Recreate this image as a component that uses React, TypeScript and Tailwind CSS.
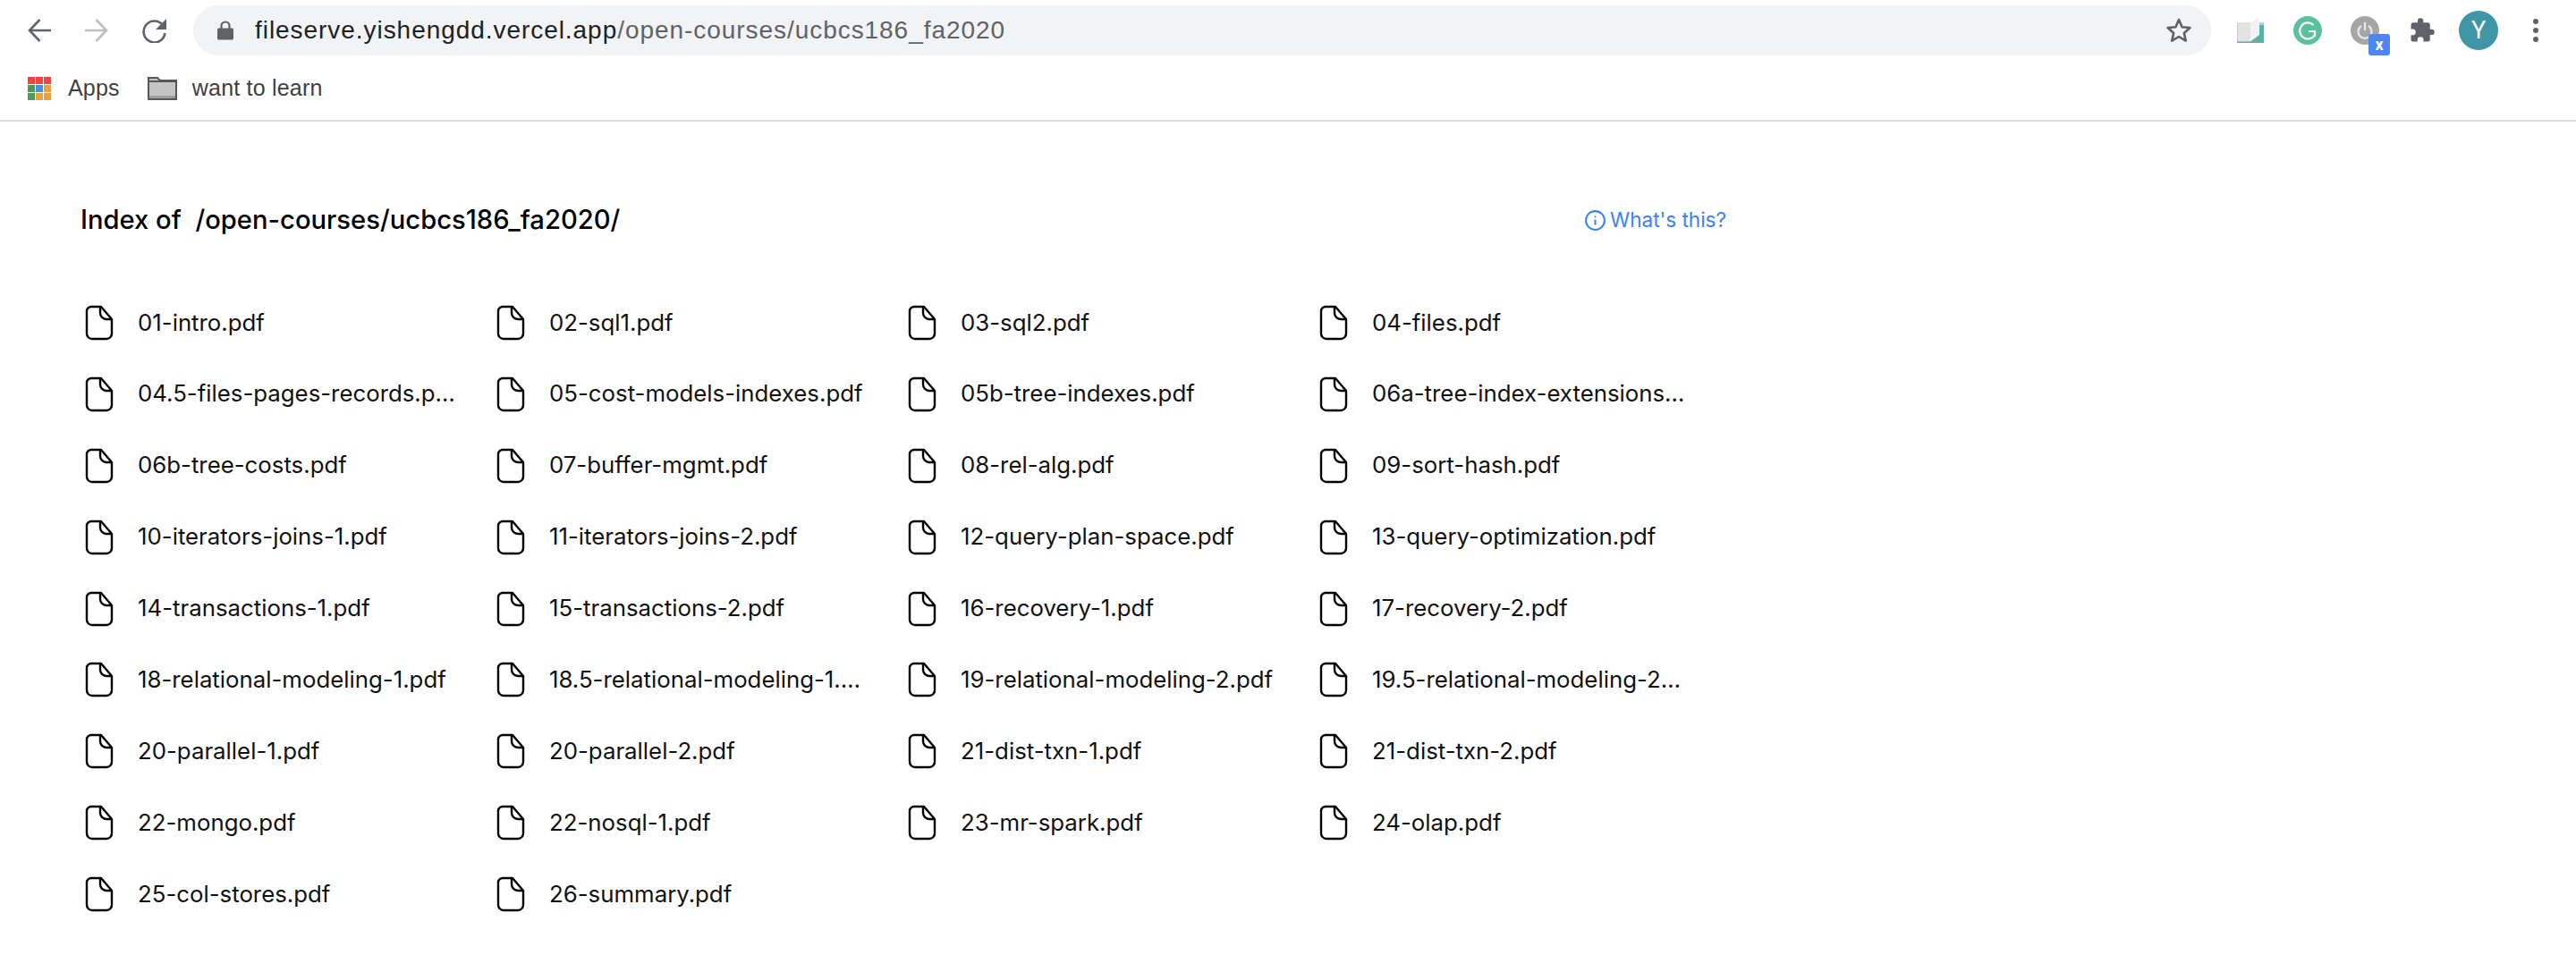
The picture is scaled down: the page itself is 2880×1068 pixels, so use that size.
import { Info } from "lucide-react";

const files = [
  "01-intro.pdf", "02-sql1.pdf", "03-sql2.pdf", "04-files.pdf",
  "04.5-files-pages-records.pdf", "05-cost-models-indexes.pdf", "05b-tree-indexes.pdf", "06a-tree-index-extensions.pdf",
  "06b-tree-costs.pdf", "07-buffer-mgmt.pdf", "08-rel-alg.pdf", "09-sort-hash.pdf",
  "10-iterators-joins-1.pdf", "11-iterators-joins-2.pdf", "12-query-plan-space.pdf", "13-query-optimization.pdf",
  "14-transactions-1.pdf", "15-transactions-2.pdf", "16-recovery-1.pdf", "17-recovery-2.pdf",
  "18-relational-modeling-1.pdf", "18.5-relational-modeling-1.pdf", "19-relational-modeling-2.pdf", "19.5-relational-modeling-2.pdf",
  "20-parallel-1.pdf", "20-parallel-2.pdf", "21-dist-txn-1.pdf", "21-dist-txn-2.pdf",
  "22-mongo.pdf", "22-nosql-1.pdf", "23-mr-spark.pdf", "24-olap.pdf",
  "25-col-stores.pdf", "26-summary.pdf",
];

const appDots = [
  "#e8493f", "#e8493f", "#e8493f",
  "#4f9a5b", "#4a8fef", "#e8a33a",
  "#4f9a5b", "#e8a33a", "#e8a33a",
];

const FileIcon = () => (
  <svg width="32" height="40" viewBox="0 0 32 40" fill="none" stroke="#000" strokeWidth="2.4" strokeLinejoin="round" className="shrink-0">
    <path d="M7 2h11L30 16v16a6 6 0 0 1-6 6H8a6 6 0 0 1-6-6V7a5 5 0 0 1 5-5z" />
    <path d="M17 2v7a7 7 0 0 0 7 7h6" />
  </svg>
);

const Toolbar = () => (
  <div className="h-[136px] border-b-2 border-[#dcdcdf] bg-white font-['Liberation_Sans',sans-serif]">
    <div className="flex h-[68px] items-center">
      <div className="flex w-[216px] items-center pl-[31px]">
        <svg width="26" height="26" viewBox="0 0 26 26" fill="none" stroke="#5f6368" strokeWidth="2.6">
          <path d="M26 13H3M13.500 1 2 13l11.500 12" />
        </svg>
        <svg width="26" height="26" viewBox="0 0 26 26" fill="none" stroke="#bdbfc2" strokeWidth="2.6" className="ml-[38px]">
          <path d="M0 13h23M12.500 1 24 13 12.500 25" />
        </svg>
        <svg width="29" height="28" viewBox="0 0 29 28" fill="none" className="ml-[37px]">
          <path d="M24 8a12 12 0 1 0 2.500 9" stroke="#5f6368" strokeWidth="2.6" />
          <path d="M28 1v12H16z" fill="#5f6368" />
        </svg>
      </div>
      <div className="flex h-[56px] w-[2256px] items-center rounded-full bg-[#f1f3f4] pl-[27px] pr-[21px]">
        <svg width="18" height="22" viewBox="0 0 18 22" className="mr-[24px] shrink-0">
          <path d="M1.500 8.500h15A1.500 1.500 0 0 1 18 10v10a1.500 1.500 0 0 1-1.500 1.500h-15A1.500 1.500 0 0 1 0 20V10a1.500 1.500 0 0 1 1.500-1.500z" fill="#5f6368" />
          <path d="M4.500 9V6a4.500 4.500 0 0 1 9 0v3" fill="none" stroke="#5f6368" strokeWidth="2.200" />
        </svg>
        <span className="text-[28px] tracking-[0.95px] text-[#202124]">
          fileserve.yishengdd.vercel.app<span className="text-[#5f6368]">/open-courses/ucbcs186_fa2020</span>
        </span>
        <svg width="30" height="30" viewBox="0 0 30 30" fill="none" stroke="#5f6368" strokeWidth="2.6" strokeLinejoin="round" className="ml-auto">
          <path d="m15 3 3.600 8.200 8.900.8-6.700 5.900 2 8.700-7.800-4.600-7.800 4.600 2-8.700L2.500 12l8.900-.8z" />
        </svg>
      </div>
      <div className="relative flex flex-1 items-center pl-[29px]">
        <svg width="30" height="28" viewBox="0 0 30 28" className="shrink-0">
          <path d="M0 5h30v23H0z" fill="#a8d5d8" />
          <path d="M15 8h15v20H15z" fill="#5fb0a3" />
          <path d="M1 5h14v21.500H1z" fill="#e3e3e3" />
          <path d="M15 5l10-5v19l-10 7.500z" fill="#f3f3f3" />
          <path d="M0 26.500h15V28H0z" fill="#5fb0a3" />
        </svg>
        <div className="ml-[33px] flex h-8 w-8 shrink-0 items-center justify-center rounded-full bg-[#5bc09c]">
          <svg width="22" height="22" viewBox="0 0 22 22" fill="none" stroke="#fff" strokeWidth="2.200">
            <path d="M17.500 5A9 9 0 1 0 19 16M12 12h7v6" />
          </svg>
        </div>
        <div className="relative ml-[32px] flex h-8 w-8 shrink-0 items-center justify-center rounded-full bg-[#a6a6a6]">
          <svg width="20" height="20" viewBox="0 0 20 20" fill="none" stroke="#e9e9e9" strokeWidth="2.200">
            <path d="M6 5a7.500 7.500 0 1 0 8 0M10 1v9" />
          </svg>
          <div className="absolute left-[20px] top-[20px] flex h-6 w-6 items-center justify-center rounded-[3px] bg-[#4d86ec] text-[18px] leading-none font-bold text-white font-['Roboto',sans-serif]">
            x
          </div>
        </div>
        <svg width="30" height="30" viewBox="0 0 24 24" fill="#5f6368" className="ml-[33px] shrink-0">
          <path d="M20.500 11H19V7a2 2 0 0 0-2-2h-4V3.500a2.500 2.500 0 0 0-5 0V5H4a2 2 0 0 0-1.990 2v3.800H3.500a2.700 2.700 0 0 1 0 5.400H2V20a2 2 0 0 0 2 2h3.800v-1.500a2.700 2.700 0 0 1 5.400 0V22H17a2 2 0 0 0 2-2v-4h1.500a2.500 2.500 0 0 0 0-5z" />
        </svg>
        <div className="ml-[26px] flex h-11 w-11 shrink-0 items-center justify-center rounded-full bg-[#3f96a6] text-[27px] text-white font-['Roboto',sans-serif]">
          Y
        </div>
        <div className="ml-[39px] flex flex-col gap-[4px]">
          <span className="h-[6px] w-[6px] rounded-full bg-[#5f6368]" />
          <span className="h-[6px] w-[6px] rounded-full bg-[#5f6368]" />
          <span className="h-[6px] w-[6px] rounded-full bg-[#5f6368]" />
        </div>
      </div>
    </div>
    <div className="flex h-[62px] items-center pl-[31px] text-[25px] text-[#3c4043]">
      <div className="grid w-[26px] grid-cols-3 gap-[1px]">
        {appDots.map((c, i) => (
          <span key={i} className="h-[8px] w-[8px]" style={{ backgroundColor: c }} />
        ))}
      </div>
      <span className="ml-[19px] tracking-[0.2px]">Apps</span>
      <svg width="33" height="26" viewBox="0 0 33 26" className="ml-[31px]">
        <path d="M1 1h10l3 3h18v21H1z" fill="#c4c4c4" stroke="#55575a" strokeWidth="2" />
        <path d="M1 5h31" stroke="#55575a" strokeWidth="2" />
        <path d="M2 21h29v3H2z" fill="#9c9c9c" />
      </svg>
      <span className="ml-[17px] tracking-[0.2px]">want to learn</span>
    </div>
  </div>
);

export default function App() {
  return (
    <div className="min-h-[1068px] overflow-hidden bg-white font-['Inter',sans-serif] text-black">
      <Toolbar />
      <div className="pl-[90px] pt-[90px]">
        <div className="flex w-[1840px] items-center">
          <h1 className="text-[29.200px] leading-[40px] font-[450] whitespace-pre">Index of  /open-courses/ucbcs186_fa2020/</h1>
          <a className="ml-auto flex items-center gap-[4px] text-[22.500px] text-[#3b82f6]">
            <Info size={25} strokeWidth={2} />
            What's this?
          </a>
        </div>
        <div className="mt-[55px] grid w-[1840px] grid-cols-4">
          {files.map((name) => (
            <div key={name} className="flex h-[79.900px] items-center pl-[5px]">
              <FileIcon />
              <span className={`ml-[27px] truncate text-[25.800px] text-[#111] ${name.startsWith("04.5") ? "w-[356px]" : "w-[351px]"}`}>{name}</span>
            </div>
          ))}
        </div>
      </div>
    </div>
  );
}
